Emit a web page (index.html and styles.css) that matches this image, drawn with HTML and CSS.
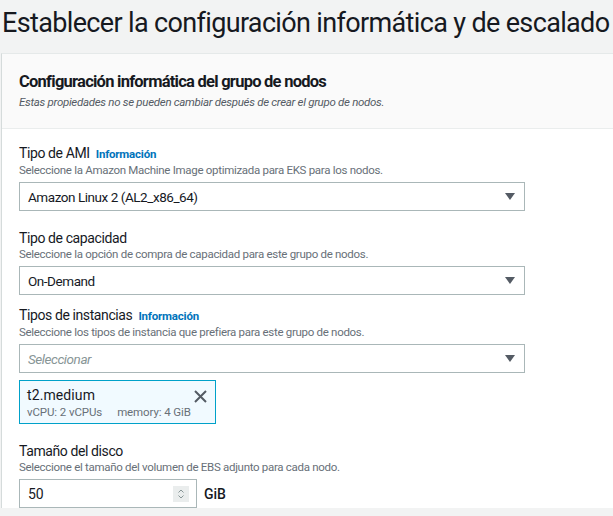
FILE: index.html
```html
<!DOCTYPE html>
<html lang="es">
<head>
<meta charset="utf-8">
<link rel="stylesheet" href="styles.css">
</head>
<body>
<h1 class="page-title">Establecer la configuración informática y de escalado</h1>
<div class="card">
  <div class="card-header">
    <h2 class="card-title">Configuración informática del grupo de nodos</h2>
    <p class="card-desc">Estas propiedades no se pueden cambiar después de crear el grupo de nodos.</p>
  </div>
  <div class="card-body">
    <div class="field">
      <div class="label">Tipo de AMI <a class="info">Información</a></div>
      <div class="desc">Seleccione la Amazon Machine Image optimizada para EKS para los nodos.</div>
      <div class="select"><span class="value">Amazon Linux 2 (AL2_x86_64)</span><span class="caret"></span></div>
    </div>
    <div class="field field-tight">
      <div class="label">Tipo de capacidad</div>
      <div class="desc">Seleccione la opción de compra de capacidad para este grupo de nodos.</div>
      <div class="select"><span class="value">On-Demand</span><span class="caret"></span></div>
    </div>
    <div class="field">
      <div class="label">Tipos de instancias <a class="info">Información</a></div>
      <div class="desc">Seleccione los tipos de instancia que prefiera para este grupo de nodos.</div>
      <div class="select"><span class="placeholder">Seleccionar</span><span class="caret"></span></div>
      <div class="token">
        <div class="token-text">
          <div class="token-name">t2.medium</div>
          <div class="token-tags"><span>vCPU: 2 vCPUs</span><span>memory: 4 GiB</span></div>
        </div>
        <svg class="token-x" width="13" height="13" viewBox="0 0 13 13"><path d="M1 1 L12 12 M12 1 L1 12" stroke="#545b64" stroke-width="2" fill="none"/></svg>
      </div>
    </div>
    <div class="field">
      <div class="label">Tamaño del disco</div>
      <div class="desc">Seleccione el tamaño del volumen de EBS adjunto para cada nodo.</div>
      <div class="disk-row">
        <div class="number"><span class="value">50</span>
          <span class="spinner"><svg width="8" height="12" viewBox="0 0 8 12"><path d="M1.5 4.5 L4 2 L6.5 4.5 M1.5 7.5 L4 10 L6.5 7.5" stroke="#879596" stroke-width="1" fill="none"/></svg></span>
        </div>
        <span class="unit">GiB</span>
      </div>
    </div>
  </div>
</div>
</body>
</html>
```
FILE: styles.css
```css
html, body {
  margin: 0;
  padding: 0;
  background: #f2f3f3;
  font-family: Roboto, "Noto Sans", sans-serif;
  color: #16191f;
}
.page-title {
  margin: 0;
  padding: 3px 0 0 2px;
  height: 53px;
  box-sizing: border-box;
  font-size: 27px;
  font-weight: 400;
  line-height: 40px;
  letter-spacing: -0.65px;
  white-space: nowrap;
}
.card {
  margin-left: 1px;
  background: #fff;
  border-left: 1px solid #d5dbdb;
  border-top: 1px solid #e5e9e9;
}
.card-header {
  background: #fafafa;
  padding: 16px 20px 0 17px;
  height: 75px;
  box-sizing: border-box;
  border-bottom: 1px solid #eaeded;
}
.card-title {
  margin: 0;
  font-size: 16.5px;
  font-weight: 700;
  line-height: 24px;
  letter-spacing: -0.75px;
  white-space: nowrap;
}
.card-desc {
  margin: 0;
  font-size: 11.5px;
  font-style: italic;
  color: #545b64;
  line-height: 16px;
  letter-spacing: -0.3px;
  white-space: nowrap;
}
.card-body {
  padding: 16px 0 0 17px;
}
.field {
  margin-bottom: 19px;
  width: 506px;
}
.field-tight { margin-bottom: 12px; }
.label {
  font-size: 14px;
  line-height: 17px;
  letter-spacing: -0.4px;
}
.info {
  margin-left: 3px;
  font-size: 11.5px;
  font-weight: 700;
  color: #0073bb;
  letter-spacing: -0.2px;
}
.desc {
  font-size: 11.5px;
  line-height: 15px;
  color: #687078;
  letter-spacing: -0.3px;
  margin-bottom: 4px;
  white-space: nowrap;
}
.select {
  height: 29px;
  box-sizing: border-box;
  border: 1px solid #aab7b8;
  background: #fff;
  display: flex;
  align-items: center;
  padding: 0 9px 0 8px;
  font-size: 13.5px;
  letter-spacing: -0.45px;
}
.select .value, .select .placeholder { flex: 1; }
.placeholder { font-style: italic; color: #879596; }
.caret {
  width: 0;
  height: 0;
  border-left: 5px solid transparent;
  border-right: 5px solid transparent;
  border-top: 7px solid #545b64;
}
.token {
  margin-top: 7px;
  width: 197px;
  height: 44px;
  box-sizing: border-box;
  border: 1px solid #00a1c9;
  background: #f1faff;
  display: flex;
  align-items: flex-start;
  padding: 5px 8px 0 7px;
}
.token-text { flex: 1; white-space: nowrap; }
.token-name { font-size: 14px; line-height: 18px; letter-spacing: 0.1px; }
.token-tags { font-size: 11.5px; line-height: 16px; color: #687078; display: flex; gap: 15px; letter-spacing: -0.1px; }
.token-x { margin-top: 4px; flex: none; }
.disk-row {
  display: flex;
  align-items: center;
  gap: 7px;
}
.number {
  width: 178px;
  height: 29px;
  box-sizing: border-box;
  border: 1px solid #aab7b8;
  background: #fff;
  display: flex;
  align-items: center;
  padding: 0 7px 0 8px;
  font-size: 14px;
}
.number .value { flex: 1; }
.spinner {
  width: 16px;
  height: 16px;
  background: #eaeded;
  display: flex;
  align-items: center;
  justify-content: center;
}
.unit { font-size: 14px; font-weight: 500; }
```
